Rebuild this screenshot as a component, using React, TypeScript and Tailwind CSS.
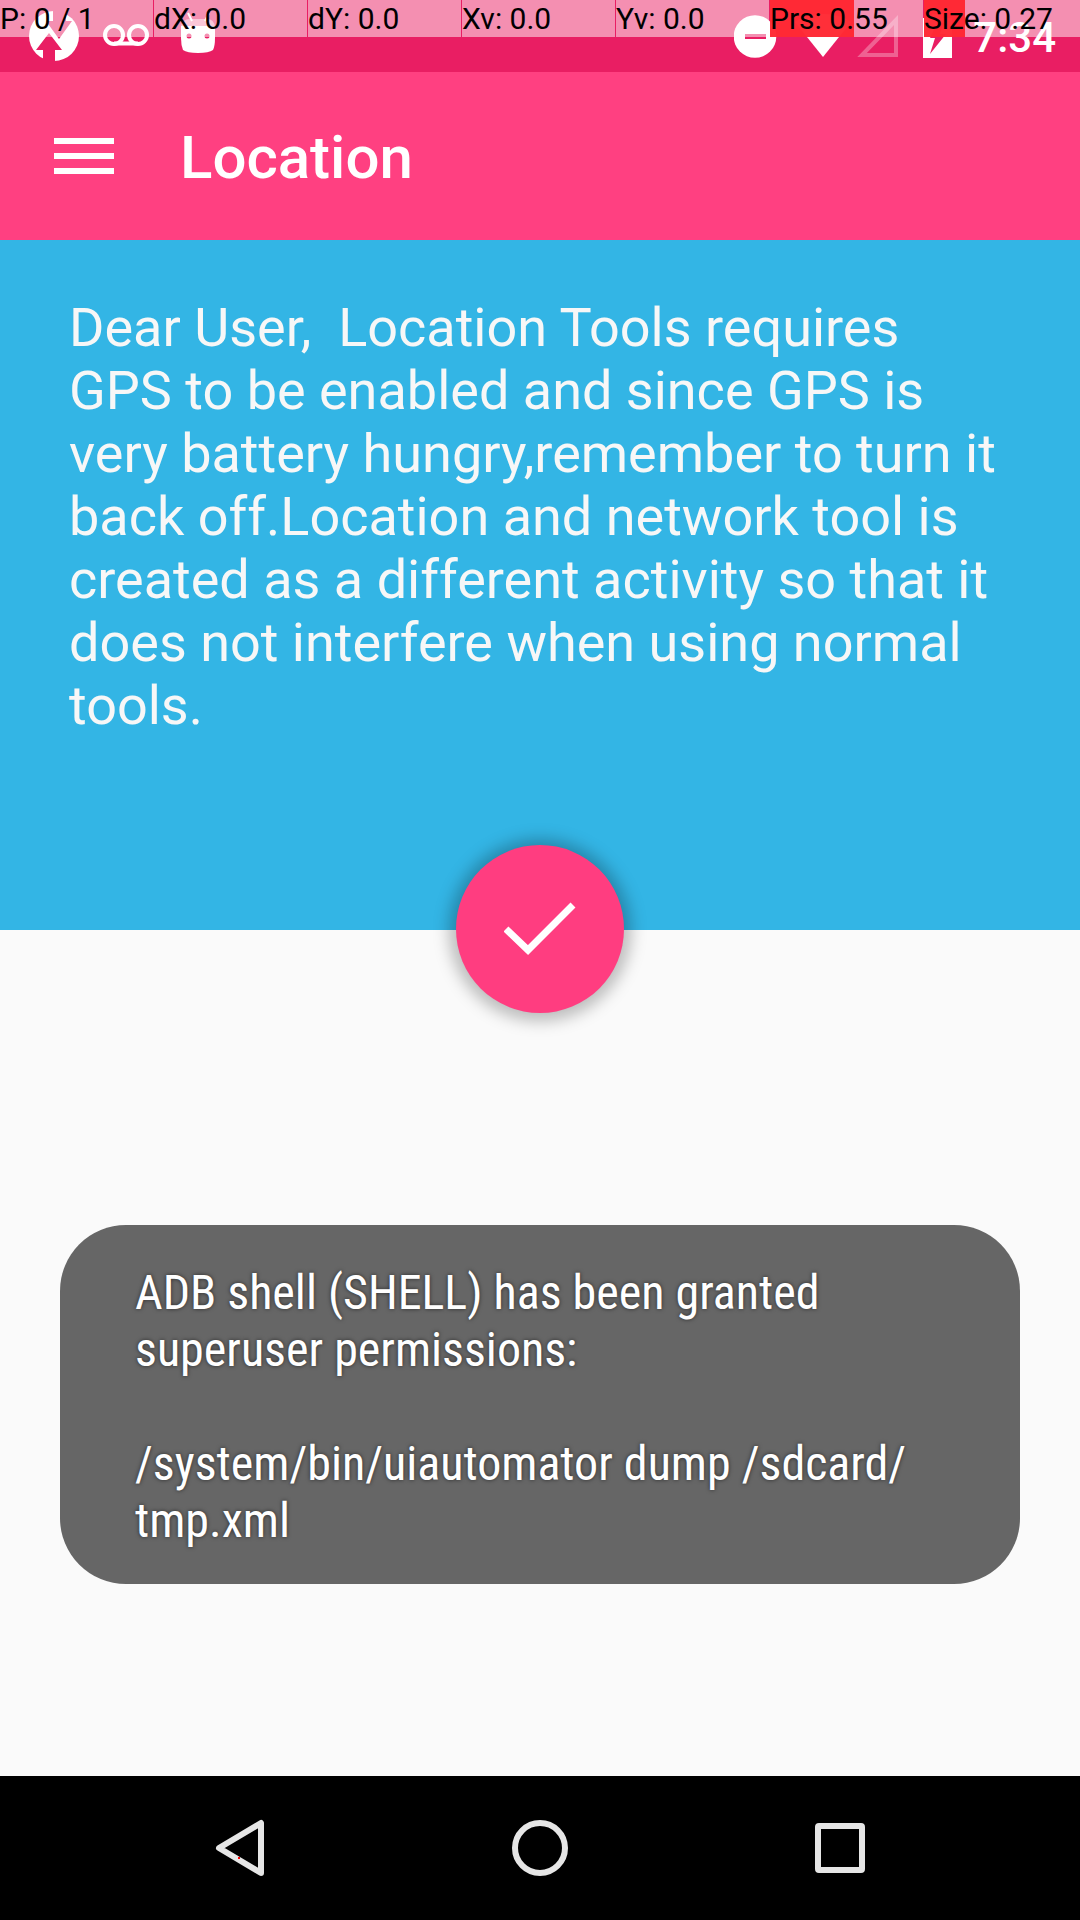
const readings = [
  { text: 'P: 0 / 1', level: 0 },
  { text: 'dX: 0.0', level: 0 },
  { text: 'dY: 0.0', level: 0 },
  { text: 'Xv: 0.0', level: 0 },
  { text: 'Yv: 0.0', level: 0 },
  { text: 'Prs: 0.55', level: 55 },
  { text: 'Size: 0.27', level: 27 },
];

function PointerOverlay() {
  return (
    <div className="absolute inset-x-0 top-0 flex h-[37px] text-[30px] leading-[37px] text-black">
      <div className="grid flex-1 grid-cols-7 gap-px">
        {readings.map((r) => (
          <div key={r.text} className="relative bg-white/50">
            <div className="absolute inset-y-0 left-0 bg-[#ff242e]/95" style={{ width: `${r.level}%` }} />
            <span className="relative whitespace-nowrap">{r.text}</span>
          </div>
        ))}
      </div>
      <div className="w-[3px] bg-white/50" />
    </div>
  );
}

function NotificationIcons() {
  return (
    <svg width="190" height="72" viewBox="28 0 190 72" fill="none" aria-hidden="true">
      <circle cx="54" cy="36" r="25" fill="#fff" />
      <path d="M53 8h13v13h6L59 39 46 21h7z" fill="#e91e63" />
      <path d="M49 33L62 50H55V64H43V50H36z" fill="#e91e63" />
      <circle cx="114" cy="35" r="9" stroke="#fff" strokeWidth="4" />
      <circle cx="138" cy="35" r="9" stroke="#fff" strokeWidth="4" />
      <path d="M114 43.500H138" stroke="#fff" strokeWidth="4" />
      <path d="M188 13L192 21M209 13L205 21" stroke="#fff" strokeWidth="2" />
      <path d="M181 27Q182 19 190 19H207Q214 19 215 27z" fill="#fff" opacity=".5" />
      <path d="M181 26H215V38Q215 46 213 50Q209 53 198 53Q187 53 183 50Q181 45 181 38z" fill="#fff" />
      <circle cx="189" cy="36" r="2.500" fill="#e91e63" />
      <circle cx="207" cy="36" r="2.500" fill="#e91e63" />
    </svg>
  );
}

function SystemIcons() {
  return (
    <svg width="220" height="72" viewBox="734 0 220 72" fill="none" aria-hidden="true">
      <circle cx="755" cy="36.500" r="21.300" fill="#fff" />
      <path d="M745 34H766V39H745z" fill="#e91e63" />
      <path d="M823 57L795 22Q807 14 823 14Q839 14 851 22z" fill="#fff" />
      <path d="M862 55H896V20z" stroke="#fff" strokeWidth="4" opacity=".3" />
      <path d="M923 18H932V14H943V18H952V58H923z" fill="#fff" />
      <path d="M937 23L930 38H935L930 54L946 34H940L944 23z" fill="#e91e63" />
    </svg>
  );
}

export default function App() {
  return (
    <div className="flex min-h-screen flex-col bg-[#fafafa] font-['Roboto',sans-serif]">
      <div className="relative flex h-[72px] items-center justify-between bg-[#e91e63] pr-6 pl-7">
        <NotificationIcons />
        <div className="flex items-center gap-[19px]">
          <SystemIcons />
          <span className="pt-1 text-[42px] leading-none font-medium text-white">7:34</span>
        </div>
        <PointerOverlay />
      </div>

      <header className="flex h-[168px] items-center bg-[#ff4081] px-[54px] text-white">
        <button type="button" aria-label="Open menu" className="flex w-[60px] flex-col gap-[9px]">
          <span className="h-1.5 w-full bg-white" />
          <span className="h-1.5 w-full bg-white" />
          <span className="h-1.5 w-full bg-white" />
        </button>
        <h1 className="pt-1 pl-[66px] text-[60px] leading-[70px] font-medium">Location</h1>
      </header>

      <section className="relative bg-[#33b5e5] px-[69px] pt-14 pb-[193px] text-[54px] leading-[63px] text-[#f7f7f7]">
        <p className="whitespace-pre-wrap">
          {
            'Dear User,  Location Tools requires GPS to be enabled and since GPS is very battery hungry,remember to turn it back off.Location and network tool is created as a different activity so that it does not interfere when using normal tools.'
          }
        </p>
        <div className="absolute inset-x-0 -bottom-[83px] flex justify-center">
          <button
            type="button"
            aria-label="Enable GPS"
            className="flex size-[168px] items-center justify-center rounded-full bg-[#ff3d80] shadow-[0_1px_16px_7px_rgba(0,0,0,0.26)]"
          >
            <svg width="72" height="72" viewBox="0 0 72 72" fill="none" aria-hidden="true">
              <path d="M2 36L24 57L69 12" stroke="#fff" strokeWidth="7" />
            </svg>
          </button>
        </div>
      </section>

      <main className="flex flex-1 items-end px-[60px] pb-48">
        <div
          role="status"
          className="w-full rounded-[66px] bg-[#666666] px-[75px] pt-[39px] pb-[35px] font-['Roboto_Condensed','Roboto',sans-serif] text-[48px] leading-[57px] text-white [text-shadow:0_0_4px_rgba(0,0,0,0.6)]"
        >
          <p>ADB shell (SHELL) has been granted superuser permissions:</p>
          <p className="mt-[57px]">
            /system/bin/uiautomator dump /sdcard/
            <wbr />
            tmp.xml
          </p>
        </div>
      </main>

      <nav className="flex h-36 items-center justify-center gap-[210px] bg-black">
        <button type="button" aria-label="Back">
          <svg width="90" height="90" viewBox="0 0 90 90" fill="none" aria-hidden="true">
            <path d="M66 20V70L24 45z" stroke="#e6e6e6" strokeWidth="6" strokeLinejoin="round" />
            <path d="M43 54h2v2h-2z" fill="#ff0000" />
          </svg>
        </button>
        <button type="button" aria-label="Home">
          <svg width="90" height="90" viewBox="0 0 90 90" fill="none" aria-hidden="true">
            <circle cx="45" cy="45" r="25" stroke="#e6e6e6" strokeWidth="6" />
          </svg>
        </button>
        <button type="button" aria-label="Recent apps">
          <svg width="90" height="90" viewBox="0 0 90 90" fill="none" aria-hidden="true">
            <rect x="23" y="23" width="44" height="44" rx="1" stroke="#e6e6e6" strokeWidth="6" strokeLinejoin="round" />
          </svg>
        </button>
      </nav>
    </div>
  );
}
